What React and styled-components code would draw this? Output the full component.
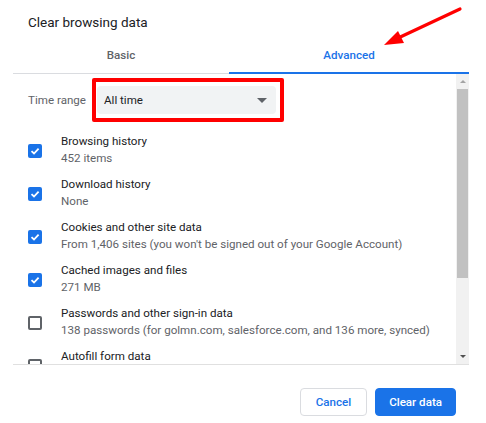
import React from "react";
import styled, { createGlobalStyle } from "styled-components";

const GlobalStyle = createGlobalStyle`
  body {
    margin: 0;
    background: #fff;
    font-family: Roboto, "Liberation Sans", Arial, sans-serif;
  }
`;

const Dialog = styled.div`
  position: relative;
  width: 486px;
  height: 423px;
  background: #fff;
  overflow: hidden;
`;

const Title = styled.h2`
  margin: 0;
  padding: 12px 0 0 28px;
  font-size: 13.5px;
  line-height: 20px;
  font-weight: 400;
  color: #202124;
`;

const Tabs = styled.div`
  display: grid;
  grid-template-columns: 216px 1fr;
  margin: 6px 17px 0 13px;
  border-bottom: 1px solid #dadce0;
`;

const Tab = styled.div`
  height: 34px;
  display: flex;
  align-items: center;
  justify-content: center;
  font-size: 11.6px;
  font-weight: 500;
  color: ${(p) => (p.$active ? "#1a73e8" : "#5f6368")};
  border-bottom: 2px solid ${(p) => (p.$active ? "#1a73e8" : "transparent")};
  margin-bottom: -1px;
`;

const ScrollArea = styled.div`
  display: flex;
  height: 290px;
  margin: 0 17px 0 13px;
  border-bottom: 1px solid #e0e0e0;
  overflow: hidden;
`;

const Content = styled.div`
  flex: 1;
  padding: 4px 0 0 15px;
`;

const RangeRow = styled.div`
  display: flex;
  align-items: center;
  gap: 6px;
  height: 44px;
  margin-bottom: 6px;
`;

const RangeLabel = styled.span`
  font-size: 11.6px;
  color: #5f6368;
`;

const Highlight = styled.div`
  border: 4px solid #f00;
  border-radius: 2px;
  padding: 4px 4px 4px 1px;
`;

const Select = styled.div`
  width: 179px;
  height: 28px;
  box-sizing: border-box;
  background: #f1f3f4;
  border-radius: 4px;
  display: flex;
  align-items: center;
  justify-content: space-between;
  padding: 0 9px 0 7px;
  font-size: 11.6px;
  color: #202124;
`;

const Caret = styled.span`
  width: 0;
  height: 0;
  border-left: 5px solid transparent;
  border-right: 5px solid transparent;
  border-top: 5px solid #5f6368;
`;

const Item = styled.div`
  display: flex;
  align-items: center;
  height: 43px;
`;

const Box = styled.span`
  width: 14px;
  height: 14px;
  box-sizing: border-box;
  border-radius: 2px;
  flex-shrink: 0;
  display: flex;
  align-items: center;
  justify-content: center;
  background: ${(p) => (p.$checked ? "#1a73e8" : "#fff")};
  border: ${(p) => (p.$checked ? "none" : "2px solid #5f6368")};
  margin-right: 19px;
  margin-top: 2px;
`;

const Texts = styled.div`
  display: flex;
  flex-direction: column;
  gap: 2px;
  min-height: 32px;
`;

const Label = styled.span`
  font-size: 11.6px;
  line-height: 15px;
  color: #202124;
`;

const Sub = styled.span`
  font-size: 11.6px;
  line-height: 15px;
  color: #5f6368;
`;

const Scrollbar = styled.div`
  width: 13px;
  background: #f1f1f1;
  display: flex;
  flex-direction: column;
  align-items: center;
`;

const ScrollArrow = styled.span`
  height: 15px;
  display: flex;
  align-items: center;
  justify-content: center;
  &::after {
    content: "";
    border-left: 3px solid transparent;
    border-right: 3px solid transparent;
    ${(p) =>
      p.$down
        ? "border-top: 3px solid #505050;"
        : "border-bottom: 3px solid #a3a3a3;"}
  }
`;

const Thumb = styled.div`
  width: 11px;
  height: 189px;
  background: #c1c1c1;
`;

const Spacer = styled.div`
  flex: 1;
`;

const Footer = styled.div`
  display: flex;
  justify-content: flex-end;
  gap: 8px;
  padding: 23px 30px 0 0;
`;

const Button = styled.button`
  height: 28px;
  box-sizing: border-box;
  padding: 0 ${(p) => (p.$primary ? "13px" : "15px")};
  border-radius: 4px;
  font-family: inherit;
  font-size: 11.6px;
  font-weight: 500;
  border: 1px solid ${(p) => (p.$primary ? "#1a73e8" : "#dadce0")};
  background: ${(p) => (p.$primary ? "#1a73e8" : "#fff")};
  color: ${(p) => (p.$primary ? "#fff" : "#1a73e8")};
`;

const Arrow = styled.svg`
  position: absolute;
  left: 378px;
  top: 2px;
  pointer-events: none;
`;

const items = [
  { label: "Browsing history", sub: "452 items", checked: true },
  { label: "Download history", sub: "None", checked: true },
  {
    label: "Cookies and other site data",
    sub: "From 1,406 sites (you won't be signed out of your Google Account)",
    checked: true,
  },
  { label: "Cached images and files", sub: "271 MB", checked: true },
  {
    label: "Passwords and other sign-in data",
    sub: "138 passwords (for golmn.com, salesforce.com, and 136 more, synced)",
    checked: false,
  },
  { label: "Autofill form data", sub: "", checked: false },
];

function Check() {
  return (
    <svg width="10" height="10" viewBox="0 0 10 10">
      <path d="M1.5 5.2 L4 7.5 L8.6 2.6" fill="none" stroke="#fff" strokeWidth="1.8" />
    </svg>
  );
}

export default function App() {
  return (
    <>
      <GlobalStyle />
      <Dialog>
        <Title>Clear browsing data</Title>
        <Tabs>
          <Tab>Basic</Tab>
          <Tab $active>Advanced</Tab>
        </Tabs>
        <ScrollArea>
          <Content>
            <RangeRow>
              <RangeLabel>Time range</RangeLabel>
              <Highlight>
                <Select>
                  All time
                  <Caret />
                </Select>
              </Highlight>
            </RangeRow>
            {items.map((it) => (
              <Item key={it.label}>
                <Box $checked={it.checked}>{it.checked && <Check />}</Box>
                <Texts>
                  <Label>{it.label}</Label>
                  {it.sub && <Sub>{it.sub}</Sub>}
                </Texts>
              </Item>
            ))}
          </Content>
          <Scrollbar>
            <ScrollArrow />
            <Thumb />
            <Spacer />
            <ScrollArrow $down />
          </Scrollbar>
        </ScrollArea>
        <Footer>
          <Button>Cancel</Button>
          <Button $primary>Clear data</Button>
        </Footer>
        <Arrow width="90" height="50" viewBox="0 0 90 50">
          <line x1="82" y1="7" x2="18" y2="37" stroke="#f00" strokeWidth="3.2" strokeLinecap="round" />
          <polygon points="6,43 20,29 26,41" fill="#f00" />
        </Arrow>
      </Dialog>
    </>
  );
}
